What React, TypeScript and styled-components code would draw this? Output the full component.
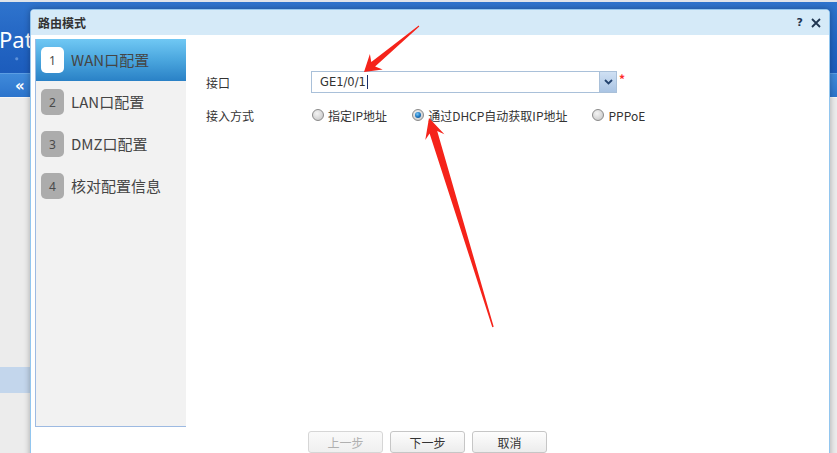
import React from 'react';
import styled, { createGlobalStyle } from 'styled-components';

const Global = createGlobalStyle`
  html, body { margin: 0; padding: 0; }
  body {
    width: 837px;
    height: 453px;
    overflow: hidden;
    background: #ececec;
    font-family: "Noto Sans CJK SC", "Noto Sans", sans-serif;
  }
`;

const Page = styled.div`
  position: relative;
  width: 837px;
  height: 453px;
  overflow: hidden;
  background: #ececec;
  display: flex;
  flex-direction: column;
`;

const TopLine = styled.div`
  height: 2px;
  background: #dfe4ea;
`;

const Banner = styled.div`
  height: 71px;
  display: flex;
  align-items: center;
  background:
    radial-gradient(circle at 14% 62%, rgba(190, 220, 255, 0.45) 0 1px, transparent 2px),
    radial-gradient(circle at 2% 80%, rgba(190, 220, 255, 0.4) 0 1px, transparent 2px),
    linear-gradient(180deg, #2f74cd 0%, #2264c2 60%, #1c5cbc 100%);
`;

const Brand = styled.span`
  color: #ffffff;
  font-family: "Noto Sans", "Open Sans", sans-serif;
  font-size: 22px;
  margin-left: -1px;
  margin-top: 2px;
`;

const NavBar = styled.div`
  height: 24px;
  box-sizing: border-box;
  border-top: 1px solid #5b9de3;
  background: linear-gradient(180deg, #3f8ada 0%, #2c74cc 100%);
  display: flex;
  align-items: center;
  padding-left: 15px;
  color: #ffffff;
  font-family: "DejaVu Sans", sans-serif;
  font-size: 15px;
  font-weight: bold;
`;

const SideBody = styled.div`
  flex: 1;
  display: flex;
  flex-direction: column;
  border-top: 1px solid #f6f6f6;
`;

const SideRow = styled.div<{ $active?: boolean }>`
  height: 26px;
  width: 30px;
  margin-top: ${(p) => (p.$active ? '269px' : '0')};
  background: ${(p) => (p.$active ? '#c3d6ec' : 'transparent')};
`;

const Dialog = styled.div`
  position: absolute;
  left: 30px;
  top: 9px;
  width: 800px;
  height: 470px;
  box-sizing: border-box;
  border: 1px solid #92c6ef;
  border-radius: 4px 4px 0 0;
  background: #ffffff;
  box-shadow: 0 0 6px rgba(0, 0, 0, 0.3);
  display: flex;
  flex-direction: column;
`;

const TitleBar = styled.div`
  height: 25px;
  flex: none;
  background: #d5eaf8;
  border-radius: 3px 3px 0 0;
  display: flex;
  align-items: center;
  padding: 0 8px 0 7px;
`;

const Title = styled.span`
  flex: 1;
  font-size: 12px;
  font-weight: bold;
  color: #333333;
`;

const TitleTools = styled.div`
  display: flex;
  align-items: center;
  gap: 8px;
`;

const Help = styled.span`
  font-family: "DejaVu Sans", sans-serif;
  font-size: 11px;
  font-weight: bold;
  color: #1f3550;
`;

const Content = styled.div`
  display: flex;
  padding: 4px 3px 0 4px;
`;

const Steps = styled.div`
  width: 151px;
  height: 388px;
  box-sizing: border-box;
  border: 1px solid #9dbae2;
  border-top: none;
  border-right: none;
  background: #f2f2f2;
  display: flex;
  flex-direction: column;
`;

const Step = styled.div<{ $active?: boolean }>`
  height: 42px;
  display: flex;
  align-items: center;
  padding-left: 5px;
  gap: 7px;
  background: ${(p) =>
    p.$active ? 'linear-gradient(180deg, #70c8f4 0%, #4aa6de 50%, #2a81c6 100%)' : 'transparent'};
`;

const Badge = styled.span<{ $active?: boolean }>`
  width: 23px;
  height: 26px;
  border-radius: 5px;
  background: ${(p) => (p.$active ? '#ffffff' : '#acacac')};
  color: #4a4a4a;
  font-family: "Noto Sans", sans-serif;
  font-size: 12px;
  display: flex;
  align-items: center;
  justify-content: center;
`;

const StepLabel = styled.span`
  font-size: 15px;
  color: #454545;
  margin-top: -1px;
`;

const Form = styled.div`
  flex: 1;
  padding: 32px 0 0 20px;
  display: grid;
  grid-template-columns: 105px auto;
  grid-auto-rows: min-content;
  row-gap: 13px;
  align-items: center;
`;

const Label = styled.span`
  font-size: 12px;
  color: #333333;
`;

const FieldWrap = styled.div`
  display: flex;
  align-items: flex-start;
`;

const Combo = styled.div`
  width: 306px;
  height: 22px;
  box-sizing: border-box;
  border: 1px solid #a9c0d9;
  display: flex;
  background: #ffffff;
`;

const ComboText = styled.div`
  flex: 1;
  display: flex;
  align-items: center;
  padding-left: 8px;
  font-family: "DejaVu Sans", sans-serif;
  font-size: 11.5px;
  color: #333333;
`;

const Caret = styled.span`
  display: inline-block;
  width: 1px;
  height: 14px;
  margin-left: 1px;
  background: #1a2f6a;
`;

const DropButton = styled.div`
  width: 16px;
  border-left: 1px solid #a9c0d9;
  background: linear-gradient(180deg, #cfe0f3 0%, #aac4e3 100%);
  display: flex;
  align-items: center;
  justify-content: center;
`;

const Required = styled.span`
  color: #ff2a2a;
  font-size: 12px;
  font-weight: bold;
  line-height: 12px;
  margin-left: 2px;
  margin-top: 2px;
`;

const RadioGroup = styled.div`
  display: flex;
  align-items: center;
  gap: 24px;
  height: 18px;
`;

const RadioItem = styled.label`
  display: flex;
  align-items: center;
  gap: 4px;
  font-size: 12px;
  color: #333333;
`;

const RadioDot = styled.span<{ $checked?: boolean }>`
  width: 12px;
  height: 12px;
  box-sizing: border-box;
  border-radius: 50%;
  border: 1px solid #8a8a8a;
  background: radial-gradient(circle at 40% 35%, #f4f4f4 0%, #d6d6d6 60%, #bcbcbc 100%);
  display: flex;
  align-items: center;
  justify-content: center;
  margin-left: 1px;

  &::after {
    content: '';
    display: ${(p) => (p.$checked ? 'block' : 'none')};
    width: 6px;
    height: 6px;
    border-radius: 50%;
    background: radial-gradient(circle at 40% 35%, #7cc8f6 0%, #1f7ac4 50%, #0b3f77 100%);
  }
`;

const Footer = styled.div`
  display: flex;
  justify-content: center;
  gap: 7px;
  padding: 4px 5px 0 0;
`;

const Button = styled.button`
  width: 75px;
  height: 22px;
  box-sizing: border-box;
  border: 1px solid #c6c6c6;
  border-radius: 3px;
  background: linear-gradient(180deg, #fdfdfd 0%, #ececec 100%);
  font-family: "Noto Sans CJK SC", sans-serif;
  font-size: 12px;
  color: #333333;
  padding: 0;

  &:disabled {
    color: #b0b0b0;
    border-color: #d6d6d6;
    background: linear-gradient(180deg, #fafafa 0%, #f0f0f0 100%);
  }
`;

const Overlay = styled.svg`
  position: absolute;
  left: 0;
  top: 0;
  pointer-events: none;
`;

const steps = ['WAN口配置', 'LAN口配置', 'DMZ口配置', '核对配置信息'];

export default function App() {
  return (
    <>
      <Global />
      <Page>
        <TopLine />
        <Banner>
          <Brand>Pat</Brand>
        </Banner>
        <NavBar>«</NavBar>
        <SideBody>
          <SideRow $active />
        </SideBody>

        <Dialog>
          <TitleBar>
            <Title>路由模式</Title>
            <TitleTools>
              <Help>?</Help>
              <svg width="10" height="10" viewBox="0 0 10 10">
                <path d="M1 1 L9 9 M9 1 L1 9" stroke="#1f3550" strokeWidth="1.8" />
              </svg>
            </TitleTools>
          </TitleBar>
          <Content>
            <Steps>
              {steps.map((s, i) => (
                <Step key={s} $active={i === 0}>
                  <Badge $active={i === 0}>{i + 1}</Badge>
                  <StepLabel>{s}</StepLabel>
                </Step>
              ))}
            </Steps>
            <Form>
              <Label>接口</Label>
              <FieldWrap>
                <Combo>
                  <ComboText>
                    GE1/0/1
                    <Caret />
                  </ComboText>
                  <DropButton>
                    <svg width="9" height="6" viewBox="0 0 9 6">
                      <path d="M1 1 L4.5 4.5 L8 1" fill="none" stroke="#23426e" strokeWidth="1.8" />
                    </svg>
                  </DropButton>
                </Combo>
                <Required>*</Required>
              </FieldWrap>
              <Label>接入方式</Label>
              <RadioGroup>
                <RadioItem>
                  <RadioDot />
                  指定IP地址
                </RadioItem>
                <RadioItem>
                  <RadioDot $checked />
                  通过DHCP自动获取IP地址
                </RadioItem>
                <RadioItem>
                  <RadioDot />
                  PPPoE
                </RadioItem>
              </RadioGroup>
            </Form>
          </Content>
          <Footer>
            <Button disabled>上一步</Button>
            <Button>下一步</Button>
            <Button>取消</Button>
          </Footer>
        </Dialog>

        <Overlay width="837" height="453" viewBox="0 0 837 453">
          <polygon
            fill="#f5231a"
            points="364,72 382.7,69.4 375.1,66.6 419.3,26.4 418.7,25.6 371.3,62 369.9,54"
          />
          <polygon
            fill="#f5231a"
            points="429,118 444.4,134.2 437.2,131.1 493.7,326.8 492.3,327.2 429.6,133.5 425.3,140"
          />
        </Overlay>
      </Page>
    </>
  );
}
